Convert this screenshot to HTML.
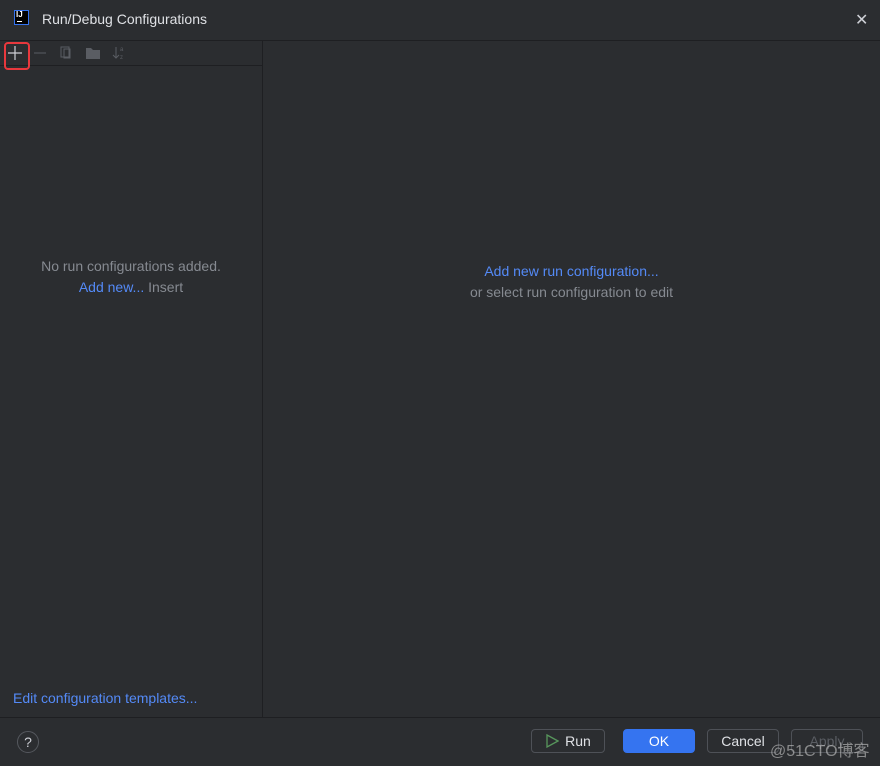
<!DOCTYPE html>
<html><head><style>
body{margin:0;width:880px;height:766px;background:#2b2d30;font-family:"Liberation Sans",sans-serif;font-size:14px;position:relative;overflow:hidden;color:#dfe1e5}
.a{position:absolute}
.link{color:#548af7}
.gray{color:#868a91}
.btn{position:absolute;top:729px;height:24px;border:1px solid #4e5157;border-radius:4px;box-sizing:border-box;text-align:center;line-height:22px;font-size:14px}
</style></head><body>
<div class="a" style="left:14px;top:10px;width:15px;height:15px;background:#000;border:1px solid #3574f0;box-sizing:border-box"></div>
<div class="a" style="left:16px;top:10px;color:#fff;font-size:8px;font-weight:bold;line-height:10px">IJ</div>
<div class="a" style="left:17px;top:21px;width:5px;height:1px;background:#fff"></div>
<div class="a" style="left:42px;top:11px;font-size:14px;color:#dfe1e5">Run/Debug Configurations</div>
<div class="a" style="left:855px;top:10px;color:#ced0d6;font-size:16px">✕</div>
<div class="a" style="left:0;top:40px;width:880px;height:1px;background:#1e1f22"></div>
<div class="a" style="left:262px;top:41px;width:1px;height:676px;background:#1e1f22"></div>
<div class="a" style="left:0;top:65px;width:262px;height:1px;background:#1e1f22"></div>
<div class="a" style="left:0;top:717px;width:880px;height:1px;background:#1e1f22"></div>
<div class="a" style="left:4px;top:42px;width:22px;height:24px;border:2px solid #e8383d;border-radius:4px"></div>
<svg class="a" style="left:0;top:40px" width="140" height="26">
<path d="M15 6v14M8 13h14" stroke="#ced0d6" stroke-width="1.2"/>
<path d="M34 13h12" stroke="#5a5d63"/>
<rect x="61" y="7" width="8" height="10" fill="none" stroke="#5a5d63"/><rect x="64" y="9" width="6" height="9" fill="none" stroke="#5a5d63"/>
<path d="M86 8h5l2 2h7v9h-14z" fill="#5a5d63"/>
<path d="M116 7v11M113 15l3 3 3-3" stroke="#5a5d63" fill="none"/>
<text x="120" y="11" font-size="6" fill="#5a5d63">a</text><text x="120" y="19" font-size="6" fill="#5a5d63">z</text>
</svg>
<div class="a gray" style="left:0;width:262px;top:258px;text-align:center">No run configurations added.</div>
<div class="a" style="left:0;width:262px;top:279px;text-align:center"><span class="link">Add new...</span> <span class="gray">Insert</span></div>
<div class="a link" style="left:263px;width:617px;top:263px;text-align:center">Add new run configuration...</div>
<div class="a gray" style="left:263px;width:617px;top:284px;text-align:center">or select run configuration to edit</div>
<div class="a link" style="left:13px;top:690px">Edit configuration templates...</div>
<div class="a" style="left:17px;top:731px;width:22px;height:22px;border:1px solid #55585e;border-radius:50%;box-sizing:border-box;text-align:center;line-height:20px;color:#ced0d6;font-size:14px">?</div>
<div class="btn" style="left:531px;width:74px"><svg width="14" height="14" style="vertical-align:-2px;margin-right:6px"><path d="M2 1l11 6-11 6z" fill="none" stroke="#57965c" stroke-width="1.3"/></svg>Run</div>
<div class="btn" style="left:623px;width:72px;background:#3574f0;border-color:#3574f0;color:#fff">OK</div>
<div class="btn" style="left:707px;width:72px">Cancel</div>
<div class="btn" style="left:791px;width:72px;color:#5a5d63">Apply</div>
<div class="a" style="left:770px;top:737px;color:rgba(200,200,200,0.6);font-size:16px;font-family:'Liberation Sans','Noto Sans CJK SC',sans-serif">@51CTO博客</div>
</body></html>
